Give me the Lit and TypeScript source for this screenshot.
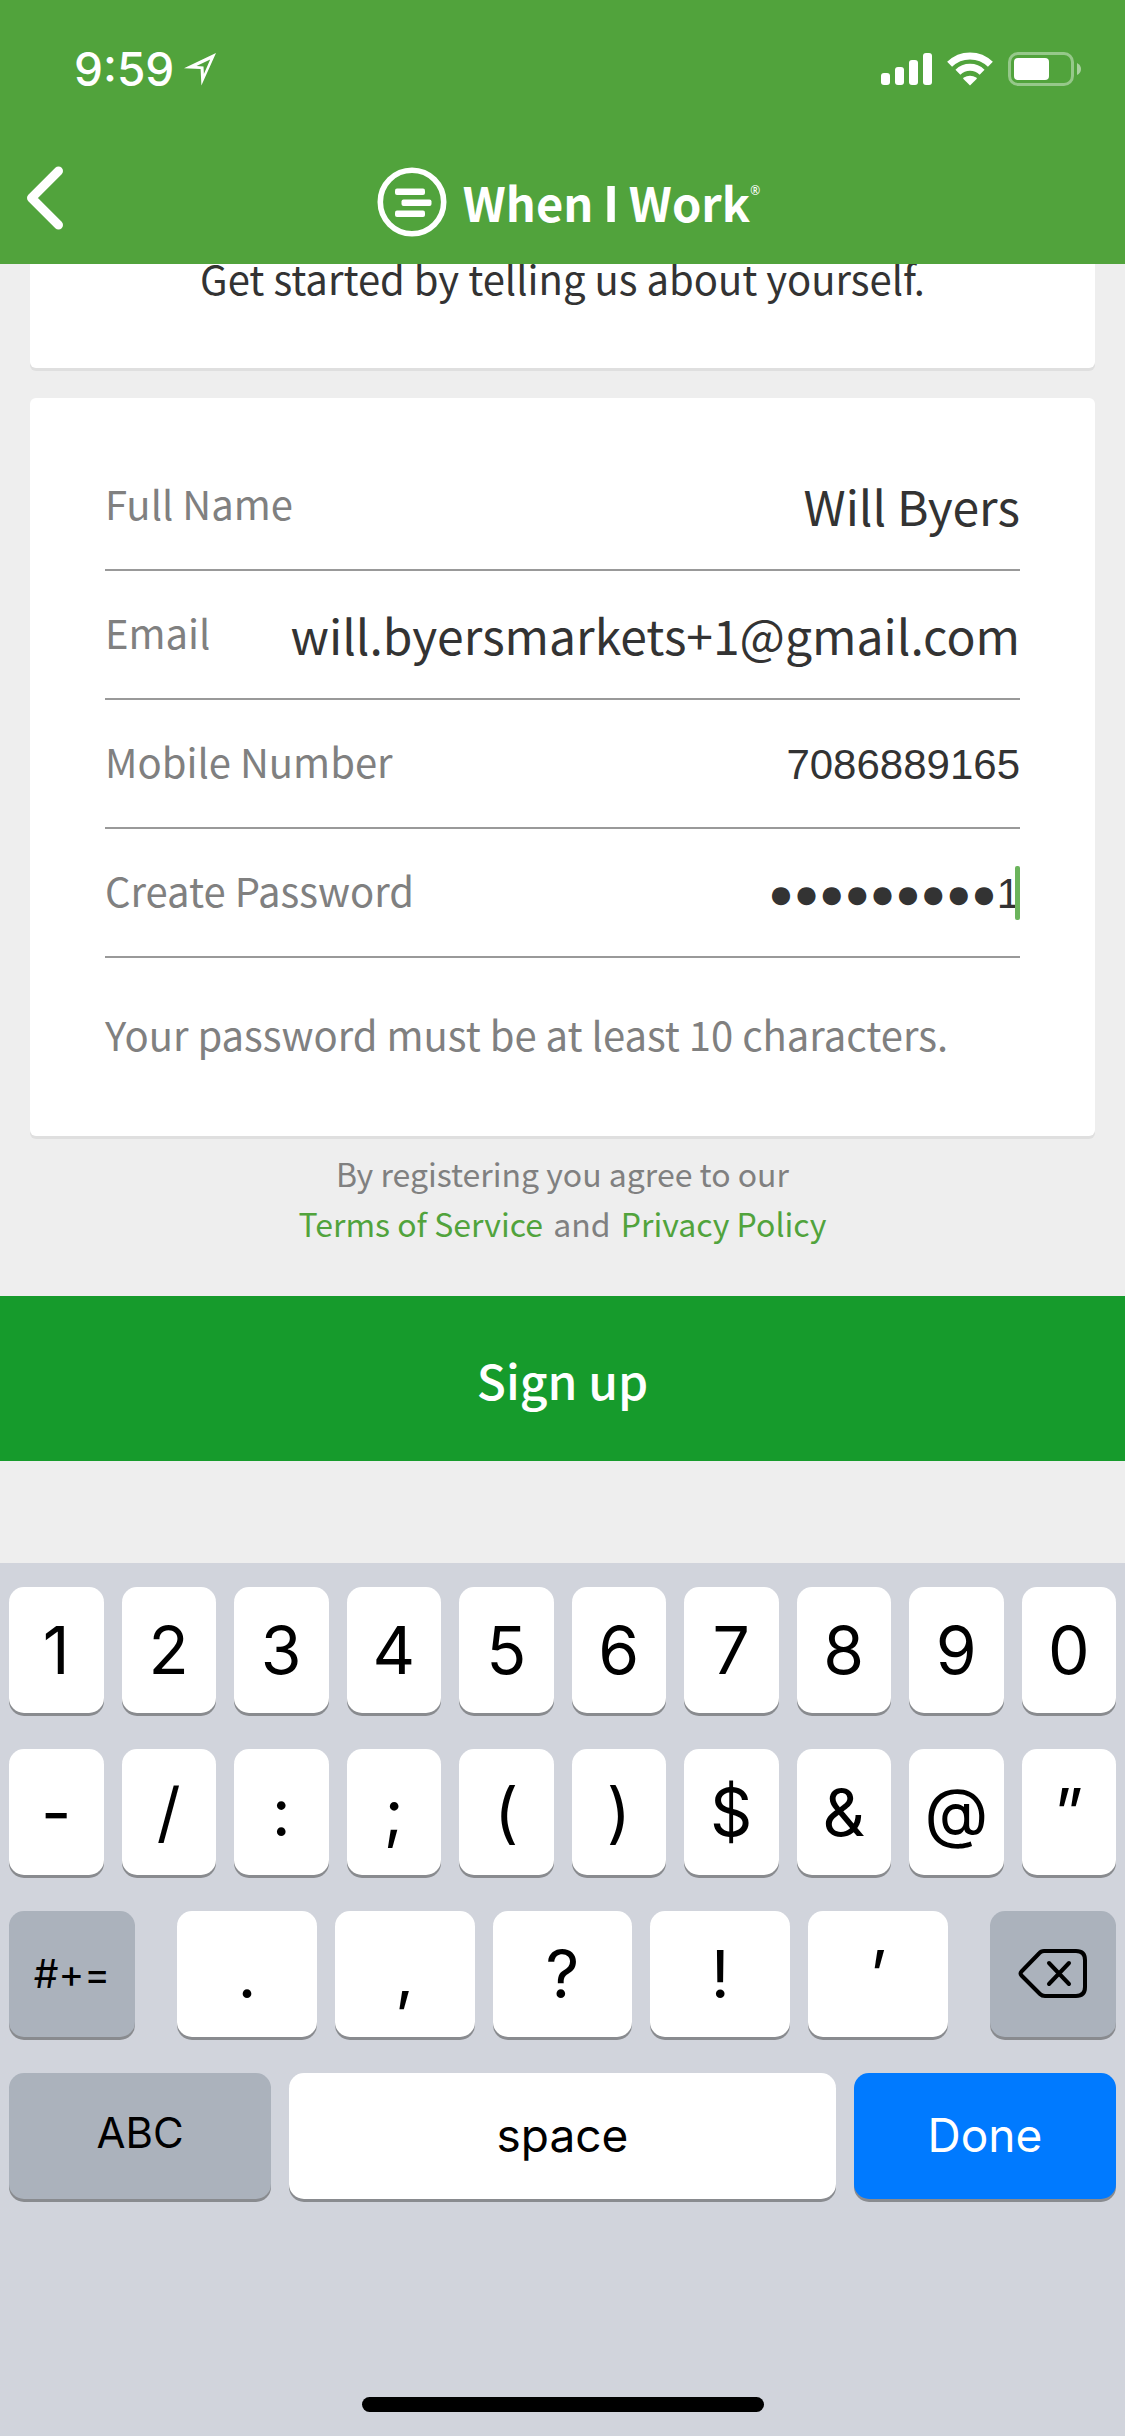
import { LitElement, html, css, svg } from "lit";
import { customElement, property } from "lit/decorators.js";
import { classMap } from "lit/directives/class-map.js";

@customElement("status-bar")
class StatusBar extends LitElement {
  static styles = css`
    :host {
      display: block;
    }
    .bar {
      display: flex;
      align-items: center;
      justify-content: space-between;
      padding: 44px 44px 44px 74px;
      color: #fff;
    }
    .left,
    .right {
      display: flex;
      align-items: center;
    }
    .left {
      gap: 10px;
    }
    .right {
      gap: 15px;
    }
    .time {
      font: 500 46px/50px Inter, "Liberation Sans", sans-serif;
    }
    svg {
      display: block;
    }
  `;

  render() {
    return html`
      <div class="bar">
        <div class="left">
          <span class="time">9:59</span>
          <svg width="32" height="34" viewBox="0 0 32 34" aria-label="Location">
            <path
              fill="#fff"
              fill-rule="evenodd"
              d="M0 16.2 32 1 17.4 33.4 16.6 16.9ZM12.5 14 19.5 14.6 19.9 22 26.2 7.6Z"
            />
          </svg>
        </div>
        <div class="right">
          <svg width="51" height="34" viewBox="0 0 51 34" fill="#fff" aria-label="Signal">
            <rect x="0" y="21" width="9" height="12" rx="3" />
            <rect x="14" y="15" width="9" height="18" rx="3" />
            <rect x="28" y="8" width="9" height="25" rx="3" />
            <rect x="42" y="1" width="9" height="32" rx="3" />
          </svg>
          <svg width="46" height="34" viewBox="0 0 46 34" aria-label="Wi-Fi">
            <g fill="none" stroke="#fff" stroke-width="7">
              <path d="M2.6 12.3A29 29 0 0 1 43.4 12.3" />
              <path d="M10.9 20.3A17.3 17.3 0 0 1 35.1 20.3" />
            </g>
            <path
              fill="#fff"
              d="M23 33.4 16.2 26.7Q16 25.9 16.8 25.4 19.6 23.7 23 23.7T29.2 25.4Q30 25.9 29.8 26.7Z"
            />
          </svg>
          <svg width="73" height="34" viewBox="0 0 73 34" aria-label="Battery">
            <rect
              x="1.5"
              y="1.5"
              width="63"
              height="31"
              rx="8.5"
              fill="none"
              stroke="#fff"
              stroke-opacity=".4"
              stroke-width="3"
            />
            <rect x="6" y="6" width="35" height="22" rx="4" fill="#fff" />
            <path d="M69 11Q73 13 73 17T69 23Z" fill="#fff" fill-opacity=".5" />
          </svg>
        </div>
      </div>
    `;
  }
}

@customElement("brand-bar")
class BrandBar extends LitElement {
  static styles = css`
    :host {
      display: block;
    }
    .bar {
      display: grid;
      grid-template-columns: 1fr auto 1fr;
      align-items: center;
      height: 126px;
      padding: 0 24px;
    }
    .back {
      justify-self: start;
      padding: 0 0 6px;
      border: 0;
      background: none;
      cursor: pointer;
    }
    svg {
      display: block;
    }
    .brand {
      display: flex;
      align-items: center;
      gap: 16px;
      color: #fff;
      padding: 2px 0 0 12px;
    }
    .word {
      display: flex;
      align-items: flex-start;
      font: 700 47px/68px "Noto Sans CJK SC", "Noto Sans", sans-serif;
      white-space: nowrap;
    }
    .bare {
      font: 700 51px/60px "Liberation Sans", Arial, sans-serif;
    }
    .mark {
      font: 400 12px/46px "Noto Sans", sans-serif;
    }
  `;

  render() {
    return html`
      <div class="bar">
        <button class="back" aria-label="Back">
          <svg width="44" height="72" viewBox="0 0 44 72">
            <path
              d="M34.5 9 7.5 36 34.5 63"
              fill="none"
              stroke="#fff"
              stroke-width="9"
              stroke-linecap="round"
              stroke-linejoin="round"
            />
          </svg>
        </button>
        <div class="brand">
          <svg width="70" height="70" viewBox="0 0 70 70">
            <circle cx="35" cy="35" r="31.7" fill="none" stroke="#fff" stroke-width="5.6" />
            <g fill="#fff">
              <rect x="18" y="21.5" width="30" height="6.5" rx="2" />
              <rect x="24.5" y="32.5" width="30" height="6.5" rx="2" />
              <rect x="18" y="43.5" width="30" height="6.5" rx="2" />
            </g>
          </svg>
          <span class="word"
            ><span>When <span class="bare">I</span> Work</span><span class="mark">®</span></span
          >
        </div>
      </div>
    `;
  }
}

interface Field {
  id: string;
  label: string;
  value: string;
  type: string;
  plain?: boolean;
  focused?: boolean;
}

const FIELDS: Field[] = [
  { id: "name", label: "Full Name", value: "Will Byers", type: "text" },
  { id: "email", label: "Email", value: "will.byersmarkets+1@gmail.com", type: "email" },
  { id: "phone", label: "Mobile Number", value: "7086889165", type: "tel", plain: true },
  { id: "pass", label: "Create Password", value: "●●●●●●●●●1", type: "text", plain: true, focused: true },
];

@customElement("sign-up-form")
class SignUpForm extends LitElement {
  static styles = css`
    :host {
      display: block;
      font-family: "Noto Sans CJK SC", "Noto Sans", sans-serif;
      color: #808080;
    }
    .cards {
      display: flex;
      flex-direction: column;
      gap: 30px;
      padding: 0 30px;
    }
    .card {
      background: #fff;
      border-radius: 6px;
      box-shadow: 0 3px 0 #dfdfdf;
    }
    .intro {
      border-radius: 0 0 6px 6px;
      padding-bottom: 76px;
      text-align: center;
      color: #333;
      font-size: 40px;
      line-height: 28px;
    }
    .intro p,
    .hint,
    .legal p {
      margin: 0;
    }
    .fields {
      padding: 44px 75px 66px;
    }
    .row {
      position: relative;
      display: flex;
      align-items: center;
      height: 127px;
      border-bottom: 2px solid #999;
    }
    .label {
      flex: none;
      font-size: 40px;
      line-height: 60px;
      padding-bottom: 6px;
    }
    .value {
      flex: 1;
      min-width: 0;
      height: 72px;
      padding: 0 0 2px;
      border: 0;
      outline: 0;
      background: none;
      text-align: right;
      color: #333;
      font: 400 48px/68px "Noto Sans CJK SC", "Noto Sans", sans-serif;
    }
    .value.plain {
      padding: 2px 0 0;
      font: 400 42px/68px "Liberation Sans", Arial, sans-serif;
    }
    .caret {
      position: absolute;
      right: 0;
      width: 5px;
      height: 54px;
      border-radius: 2px;
      background: #6bb45c;
    }
    .hint {
      padding-top: 40px;
      font-size: 40px;
      line-height: 72px;
    }
    .legal {
      padding: 12px 30px 48px;
      text-align: center;
      font-size: 32px;
      line-height: 50px;
    }
    .legal a {
      color: #51a33c;
      text-decoration: none;
      padding: 0 3px;
    }
    .submit {
      display: block;
      width: 100%;
      height: 165px;
      border: 0;
      padding: 0;
      background: #169b2c;
      color: #fff;
      font: 500 48px/72px "Noto Sans CJK SC", "Noto Sans", sans-serif;
      cursor: pointer;
    }
  `;

  private row(f: Field) {
    return html`
      <div class="row">
        <label class="label" for=${f.id}>${f.label}</label>
        <input
          class=${classMap({ value: true, plain: !!f.plain })}
          id=${f.id}
          type=${f.type}
          .value=${f.value}
        />
        ${f.focused ? html`<span class="caret"></span>` : null}
      </div>
    `;
  }

  render() {
    return html`
      <form @submit=${(e: Event) => e.preventDefault()}>
        <div class="cards">
          <section class="card intro">
            <p>Get started by telling us about yourself.</p>
          </section>
          <section class="card fields">
            ${FIELDS.map((f) => this.row(f))}
            <p class="hint">Your password must be at least 10 characters.</p>
          </section>
        </div>
        <div class="legal">
          <p>By registering you agree to our</p>
          <p><a href="#terms">Terms of Service</a> and <a href="#privacy">Privacy Policy</a></p>
        </div>
        <button class="submit" type="submit">Sign up</button>
      </form>
    `;
  }
}

@customElement("key-board")
class KeyBoard extends LitElement {
  @property({ type: Array }) digits = [..."1234567890"];
  @property({ type: Array }) symbols = [..."-/:;()$&@”"];
  @property({ type: Array }) marks = [...".,?!’"];

  static styles = css`
    :host {
      display: flex;
      flex-direction: column;
      background: #d1d4dc;
    }
    .keys {
      display: flex;
      flex-direction: column;
      gap: 36px;
      padding: 24px 9px;
    }
    .row {
      display: grid;
      gap: 18px;
    }
    .ten {
      grid-template-columns: repeat(10, 1fr);
    }
    .mixed {
      grid-template-columns: 126px 1fr 126px;
      gap: 42px;
    }
    .five {
      grid-template-columns: repeat(5, 1fr);
    }
    .bottom {
      grid-template-columns: 12fr 25fr 12fr;
    }
    .key {
      display: flex;
      align-items: center;
      justify-content: center;
      box-sizing: border-box;
      min-width: 0;
      height: 126px;
      padding: 0;
      border: 0;
      border-radius: 15px;
      background: #fff;
      box-shadow: 0 3px 0 #898b8f;
      color: #000;
      font: 400 66px/80px Inter, "Liberation Sans", sans-serif;
      cursor: pointer;
    }
    .word {
      font-size: 46px;
      padding-bottom: 2px;
    }
    .letters {
      font-size: 42px;
      padding-bottom: 6px;
    }
    .signs {
      font-size: 39px;
    }
    .dark {
      background: #abb2bc;
    }
    .done {
      background: #007aff;
      color: #fff;
    }
    .foot {
      display: flex;
      flex: 1;
      align-items: flex-end;
      justify-content: center;
      padding-bottom: 24px;
    }
    .home {
      width: 402px;
      height: 15px;
      border-radius: 8px;
      background: #000;
    }
  `;

  private key(c: string) {
    return html`<button class="key" type="button">${c}</button>`;
  }

  private eraseIcon() {
    return svg`
      <svg width="72" height="54" viewBox="0 0 72 54" fill="none" stroke="#000" stroke-width="4"
        stroke-linecap="round" stroke-linejoin="round">
        <path d="M27 4H59Q68 4 68 13V40Q68 49 59 49H28Q25 49 23 47L4.5 28.5Q2.5 26.5 4.5 24.5L22 6.5Q24 4 27 4Z"/>
        <path d="M32 16 52 37M52 16 32 37"/>
      </svg>`;
  }

  render() {
    return html`
      <div class="keys">
        <div class="row ten">${this.digits.map((c) => this.key(c))}</div>
        <div class="row ten">${this.symbols.map((c) => this.key(c))}</div>
        <div class="row mixed">
          <button class="key signs dark" type="button">#+=</button>
          <div class="row five">${this.marks.map((c) => this.key(c))}</div>
          <button class="key dark" type="button" aria-label="Delete">${this.eraseIcon()}</button>
        </div>
        <div class="row bottom">
          <button class="key letters dark" type="button">ABC</button>
          <button class="key word" type="button">space</button>
          <button class="key word done" type="button">Done</button>
        </div>
      </div>
      <div class="foot"><span class="home"></span></div>
    `;
  }
}

@customElement("app-root")
class AppRoot extends LitElement {
  static styles = css`
    :host {
      display: flex;
      flex-direction: column;
      min-height: 100vh;
      background: #eee;
    }
    .top {
      position: relative;
      z-index: 1;
      background: #51a33c;
    }
    .main {
      padding-bottom: 102px;
    }
    .keyboard {
      flex: 1;
    }
  `;

  render() {
    return html`
      <header class="top">
        <status-bar></status-bar>
        <brand-bar></brand-bar>
      </header>
      <main class="main"><sign-up-form></sign-up-form></main>
      <key-board class="keyboard"></key-board>
    `;
  }
}
